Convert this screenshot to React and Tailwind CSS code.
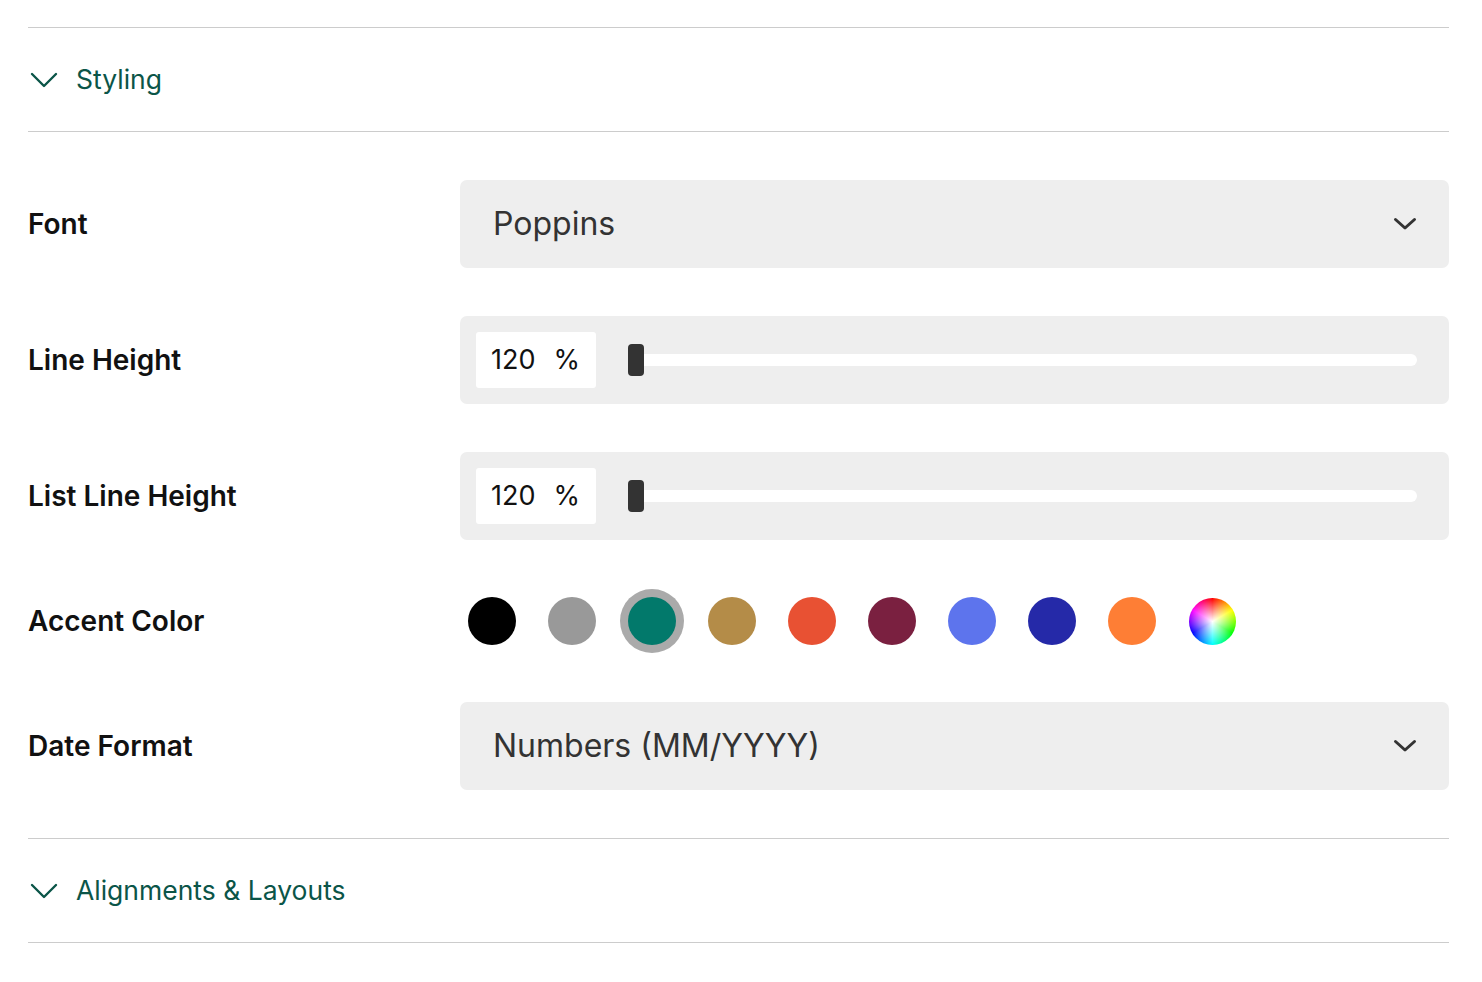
import React, { useState } from 'react'

const colors = [
  'bg-[#000000]',
  'bg-[#999999]',
  'bg-[#02796b]',
  'bg-[#b48c48]',
  'bg-[#e85133]',
  'bg-[#7a2040]',
  'bg-[#5d74ed]',
  'bg-[#2529a8]',
  'bg-[#fe7e35]',
]

const SectionHeader = ({ title }) => (
  <div className="flex items-center h-[104px] border-b border-[#cccccc]">
    <svg width="28" height="16" viewBox="0 0 28 16" className="ml-[2px] mt-[1px]">
      <path d="M2 2 L14 14 L26 2" fill="none" stroke="#0b5548" strokeWidth="2.4" strokeLinecap="round" strokeLinejoin="round" />
    </svg>
    <span className="ml-[18px] text-[26.5px] text-[#0b5548] leading-none">{title}</span>
  </div>
)

const Chevron = () => (
  <svg width="24" height="14" viewBox="0 0 24 14">
    <path d="M2.5 2.5 L12 11 L21.5 2.5" fill="none" stroke="#333333" strokeWidth="3" strokeLinecap="round" strokeLinejoin="round" />
  </svg>
)

const Row = ({ label, children }) => (
  <div className="flex items-center">
    <div className="w-[432px] shrink-0 text-[28px] font-semibold text-[#111111]">{label}</div>
    <div className="flex-1">{children}</div>
  </div>
)

const SelectBox = ({ value }) => (
  <div className="flex items-center justify-between h-[88px] rounded-[7px] bg-[#eeeeee] pl-[33px] pr-[32px]">
    <span className="text-[32px] text-[#333333]">{value}</span>
    <Chevron />
  </div>
)

const SliderBox = ({ value }) => (
  <div className="flex items-center h-[88px] rounded-[7px] bg-[#eeeeee] pl-4 pr-8">
    <div className="flex items-center w-[120px] h-[56px] bg-white rounded-[3px] pl-[15px] text-[27px] text-[#111111]">
      <span>{value}</span>
      <span className="ml-[18px]">%</span>
    </div>
    <div className="relative flex-1 ml-[32px] h-[12px] rounded-full bg-white">
      <div className="absolute left-0 top-[-10px] w-4 h-8 rounded-[4px] bg-[#333333]" />
    </div>
  </div>
)

export default function App() {
  const [selected, setSelected] = useState(2)

  return (
    <div className="min-h-screen bg-white px-[28px] pt-[27px] font-['Inter',sans-serif] mr-[5px]">
      <div className="border-t border-[#cccccc]">
        <SectionHeader title="Styling" />
      </div>

      <div className="flex flex-col gap-12 pt-12 pb-12">
        <Row label="Font">
          <SelectBox value="Poppins" />
        </Row>
        <Row label="Line Height">
          <SliderBox value="120" />
        </Row>
        <Row label="List Line Height">
          <SliderBox value="120" />
        </Row>
        <Row label="Accent Color">
          <div className="flex items-center gap-4 h-[66px]">
            {colors.map((c, i) => (
              <button
                key={c}
                onClick={() => setSelected(i)}
                className={`flex items-center justify-center w-16 h-16 rounded-full ${
                  selected === i ? 'bg-[#aaaaaa]' : ''
                }`}
              >
                <span className={`block w-12 h-12 rounded-full ${c}`} />
              </button>
            ))}
            <div className="flex items-center justify-center w-16 h-16">
              <span className="block w-[47px] h-[47px] rounded-full bg-[radial-gradient(circle,white,rgba(255,255,255,0)_70%),conic-gradient(red,yellow,lime,cyan,blue,magenta,red)]" />
            </div>
          </div>
        </Row>
        <Row label="Date Format">
          <SelectBox value="Numbers (MM/YYYY)" />
        </Row>
      </div>

      <div className="border-t border-[#cccccc]">
        <SectionHeader title="Alignments & Layouts" />
      </div>
    </div>
  )
}
